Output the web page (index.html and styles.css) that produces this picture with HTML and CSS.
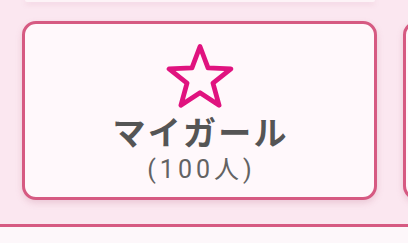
FILE: index.html
```html
<!DOCTYPE html>
<html lang="ja">
<head>
<meta charset="utf-8">
<link rel="stylesheet" href="styles.css">
</head>
<body>
<div class="page">
  <div class="top-row">
    <div class="top-card"></div>
  </div>
  <div class="row">
    <div class="card">
      <svg class="star" width="70" height="64" viewBox="0 0 70 64">
        <polygon points="35,2.5 43.02,23.96 65.91,24.96 47.98,39.22 54.10,61.29 35,48.65 15.90,61.29 22.02,39.22 4.09,24.96 26.98,23.96" fill="none" stroke="#e0137f" stroke-width="4.8" stroke-linejoin="round"/>
      </svg>
      <div class="title">マイガール</div>
      <div class="count">(100人)</div>
    </div>
    <div class="card"></div>
  </div>
</div>
<div class="divider"></div>
<div class="bottom"></div>
</body>
</html>
```
FILE: styles.css
```css
html, body {
  margin: 0;
  padding: 0;
  overflow: hidden;
  background: #fdf7fa;
  font-family: Roboto, "Noto Sans CJK JP", sans-serif;
}
.page {
  height: 224px;
  background: #fbe7f0;
  overflow: hidden;
}
.top-row {
  padding: 0 33px 0 25px;
}
.top-card {
  height: 2px;
  background: #fdf3f7;
  border-radius: 0 0 10px 10px;
  box-shadow: 0 2px 5px rgba(200, 120, 150, 0.25);
}
.row {
  display: flex;
  gap: 26px;
  margin-top: 19px;
  padding-left: 22px;
}
.card {
  flex: 0 0 auto;
  box-sizing: border-box;
  width: 355px;
  height: 179px;
  border: 3px solid #d65a82;
  border-radius: 14px;
  background: #fff8fb;
  box-shadow: 0 3px 6px rgba(190, 110, 140, 0.25);
  display: flex;
  flex-direction: column;
  align-items: center;
  padding-top: 20px;
}
.star {
  display: block;
}
.title {
  font-family: "Noto Sans CJK JP", sans-serif;
  font-weight: 700;
  font-size: 33px;
  line-height: 32px;
  color: #555;
  margin-top: 7px;
  letter-spacing: 2.25px;
  margin-right: -2.25px;
}
.count {
  font-size: 25px;
  line-height: 28px;
  color: #636363;
  letter-spacing: 4px;
  margin-right: -4px;
  margin-top: 9px;
}
.divider {
  height: 3px;
  background: #d65a82;
}
.bottom {
  height: 20px;
}
```
